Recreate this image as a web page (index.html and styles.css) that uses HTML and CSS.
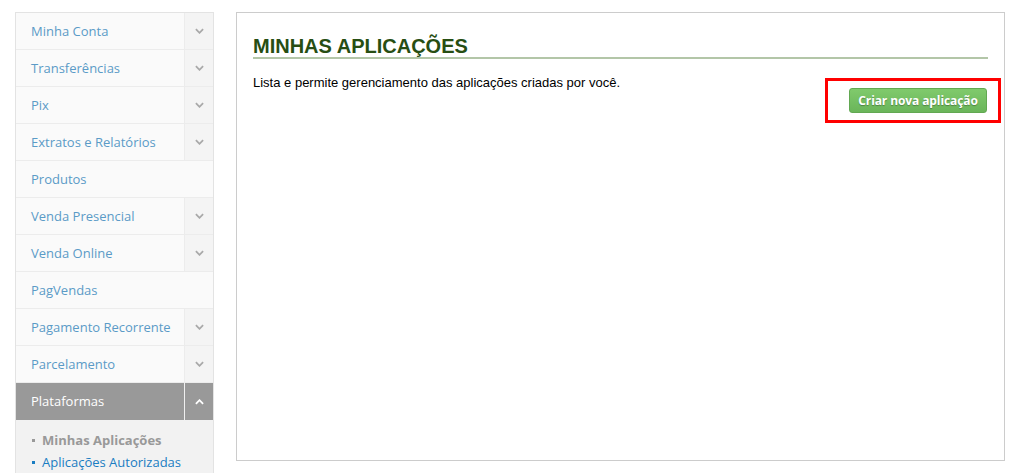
FILE: index.html
```html
<!DOCTYPE html>
<html lang="pt-BR">
<head>
    <meta charset="UTF-8">
    <title>Minhas Aplicações</title>
    <link rel="stylesheet" href="styles.css">
</head>
<body>
    <div class="page">
        <ul class="side-menu">
            <li class="menu-item"><a href="#">Minha Conta</a><span class="toggle"><svg viewBox="0 0 10 6"><path d="M1 1l4 4 4-4"/></svg></span></li>
            <li class="menu-item"><a href="#">Transferências</a><span class="toggle"><svg viewBox="0 0 10 6"><path d="M1 1l4 4 4-4"/></svg></span></li>
            <li class="menu-item"><a href="#">Pix</a><span class="toggle"><svg viewBox="0 0 10 6"><path d="M1 1l4 4 4-4"/></svg></span></li>
            <li class="menu-item"><a href="#">Extratos e Relatórios</a><span class="toggle"><svg viewBox="0 0 10 6"><path d="M1 1l4 4 4-4"/></svg></span></li>
            <li class="menu-item"><a href="#">Produtos</a></li>
            <li class="menu-item"><a href="#">Venda Presencial</a><span class="toggle"><svg viewBox="0 0 10 6"><path d="M1 1l4 4 4-4"/></svg></span></li>
            <li class="menu-item"><a href="#">Venda Online</a><span class="toggle"><svg viewBox="0 0 10 6"><path d="M1 1l4 4 4-4"/></svg></span></li>
            <li class="menu-item"><a href="#">PagVendas</a></li>
            <li class="menu-item"><a href="#">Pagamento Recorrente</a><span class="toggle"><svg viewBox="0 0 10 6"><path d="M1 1l4 4 4-4"/></svg></span></li>
            <li class="menu-item"><a href="#">Parcelamento</a><span class="toggle"><svg viewBox="0 0 10 6"><path d="M1 1l4 4 4-4"/></svg></span></li>
            <li class="menu-item open"><a href="#">Plataformas</a><span class="toggle"><svg viewBox="0 0 10 6"><path d="M1 5l4-4 4 4"/></svg></span></li>
            <li class="submenu">
                <a href="#" class="current">Minhas Aplicações</a>
                <a href="#">Aplicações Autorizadas</a>
            </li>
        </ul>

        <div class="content">
            <h1>MINHAS APLICAÇÕES</h1>
            <div class="intro">
                <p>Lista e permite gerenciamento das aplicações criadas por você.</p>
                <div class="highlight-box">
                    <a href="#" class="btn-green">Criar nova aplicação</a>
                </div>
            </div>
        </div>
    </div>
</body>
</html>
```

FILE: styles.css
```css
* {
    margin: 0;
    padding: 0;
    box-sizing: border-box;
}
body {
    background: #fff;
    font-family: 'Open Sans', sans-serif;
}
.page {
    display: flex;
    align-items: flex-start;
    gap: 22px;
    padding: 12px 0 0 15px;
}
.side-menu {
    list-style: none;
    width: 199px;
    border: 1px solid #e3e3e3;
    border-bottom: none;
    height: 461px;
    background: #f2f2f2;
}
.menu-item {
    display: flex;
    height: 37px;
    background: #fafafa;
    border-bottom: 1px solid #ececec;
}
.menu-item a {
    flex: 1;
    display: flex;
    align-items: center;
    padding-left: 15px;
    font-size: 13px;
    color: #5b9bc7;
    text-decoration: none;
}
.toggle {
    width: 29px;
    display: flex;
    align-items: center;
    justify-content: center;
    background: #f4f4f4;
    border-left: 1px solid #ececec;
}
.toggle svg {
    width: 9px;
    height: 6px;
    fill: none;
    stroke: #a9a9a9;
    stroke-width: 2;
}
.menu-item.open {
    background: #999;
    border-bottom: none;
}
.menu-item.open a {
    color: #fff;
    padding-bottom: 2px;
}
.menu-item.open .toggle {
    background: #999;
    border-left: 1px solid #f0f0f0;
}
.menu-item.open .toggle svg {
    stroke: #fff;
}
.submenu {
    display: flex;
    flex-direction: column;
    gap: 4px;
    padding: 11px 0 0 15px;
    background: #f2f2f2;
}
.submenu a {
    font-size: 13px;
    color: #1a7dc2;
    text-decoration: none;
    line-height: 18px;
}
.submenu a:before {
    content: '';
    display: inline-block;
    width: 3px;
    height: 3px;
    background: currentColor;
    vertical-align: middle;
    margin: 0 7px 3px 1px;
}
.submenu a.current {
    color: #999;
    font-weight: bold;
}
.content {
    width: 769px;
    height: 449px;
    border: 1px solid #ccc;
    padding: 22px 16px 0 16px;
    font-family: 'Liberation Sans', Arial, sans-serif;
}
h1 {
    font-size: 20px;
    font-weight: bold;
    color: #274e13;
    line-height: 22px;
    border-bottom: 2px solid #b3c6a8;
}
.intro {
    display: flex;
    justify-content: space-between;
    align-items: flex-start;
    margin-top: 16px;
}
.intro p {
    font-size: 13px;
    color: #000;
    line-height: 15px;
}
.highlight-box {
    margin: 3px -13px 0 0;
    width: 176px;
    height: 45px;
    border: 3px solid #f00;
    display: flex;
    align-items: center;
    justify-content: flex-end;
    padding-right: 11px;
}
.btn-green {
    display: inline-block;
    width: 138px;
    height: 25px;
    line-height: 23px;
    text-align: center;
    font-family: 'Open Sans', sans-serif;
    font-size: 12px;
    font-weight: bold;
    letter-spacing: -0.1px;
    color: #fff;
    text-decoration: none;
    text-shadow: 0 1px 1px rgba(0, 0, 0, 0.3);
    background: linear-gradient(#80ca6c, #6ab55a);
    border: 1px solid #62a852;
    border-radius: 3px;
}
```
